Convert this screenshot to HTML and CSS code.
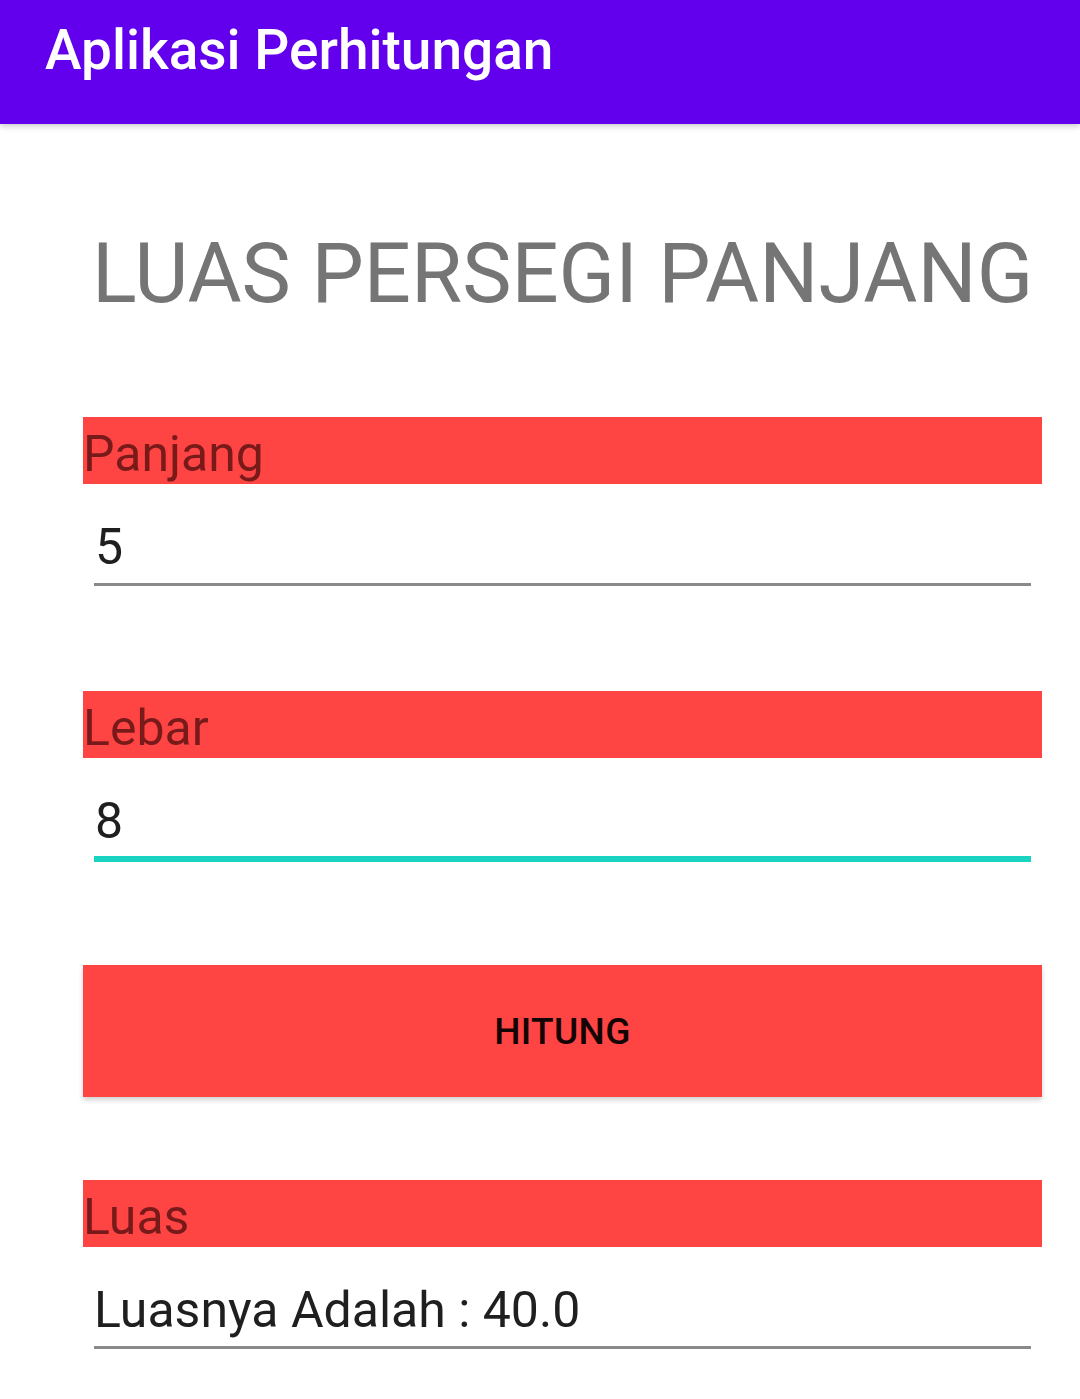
FILE: index.html
```html
<!DOCTYPE html>
<html lang="id">
<head>
<meta charset="utf-8">
<title>Aplikasi Perhitungan</title>
<link rel="stylesheet" href="styles.css">
</head>
<body>
<header class="appbar">
  <h1 class="appbar-title">Aplikasi Perhitungan</h1>
</header>
<main class="content">
  <h2 class="page-title">LUAS PERSEGI PANJANG</h2>

  <div class="label label-first">Panjang</div>
  <div class="field"><span class="field-text">5</span></div>

  <div class="label label-next">Lebar</div>
  <div class="field field-focused"><span class="field-text">8</span></div>

  <button class="btn" type="button">HITUNG</button>

  <div class="label label-result">Luas</div>
  <div class="field field-result"><span class="field-text">Luasnya Adalah : 40.0</span></div>
</main>
</body>
</html>
```
FILE: styles.css
```css
* { box-sizing: border-box; }
html, body { margin: 0; padding: 0; background: #ffffff; }
body {
  width: 1080px;
  height: 1399px;
  overflow: hidden;
  font-family: Roboto, "Liberation Sans", sans-serif;
}

.appbar {
  height: 124px;
  background: #6200ee;
  box-shadow: 0 2px 6px rgba(0, 0, 0, 0.22);
  padding-left: 45px;
  position: relative;
  z-index: 1;
}
.appbar-title {
  margin: 0;
  color: #ffffff;
  font-weight: 500;
  font-size: 55px;
  line-height: 1;
  padding-top: 23px;
}

.content {
  padding: 0 38px 0 83px;
}

.page-title {
  margin: 108px 0 0 9px;
  font-weight: 400;
  font-size: 83px;
  line-height: 1;
  color: #757575;
  white-space: nowrap;
}

.label {
  height: 67px;
  background: #ff4444;
  color: #781a1a;
  font-size: 50px;
  line-height: 1;
  padding-top: 12px;
  white-space: nowrap;
}
.label-first { margin-top: 102px; }
.label-next { margin-top: 105px; }
.label-result { margin-top: 83px; }

.field {
  margin: 0 11px;
  height: 102px;
  padding-top: 38px;
  border-bottom: 3px solid #8a8a8a;
  color: #1f1f1f;
  font-size: 50px;
  line-height: 1;
}
.field-text { display: block; padding-left: 1px; }
.field-focused {
  height: 104px;
  border-bottom: 6px solid #17d3c0;
}
.field-result { height: 102px; }
.field-result .field-text { padding-left: 0; }

.btn {
  display: block;
  width: 100%;
  height: 132px;
  margin-top: 103px;
  border: 0;
  border-radius: 0;
  background: #ff4444;
  color: #140404;
  font-family: Roboto, "Liberation Sans", sans-serif;
  font-weight: 500;
  font-size: 37px;
  letter-spacing: 0.01em;
  box-shadow: 0 3px 5px rgba(0, 0, 0, 0.18);
  padding: 0;
}
```
